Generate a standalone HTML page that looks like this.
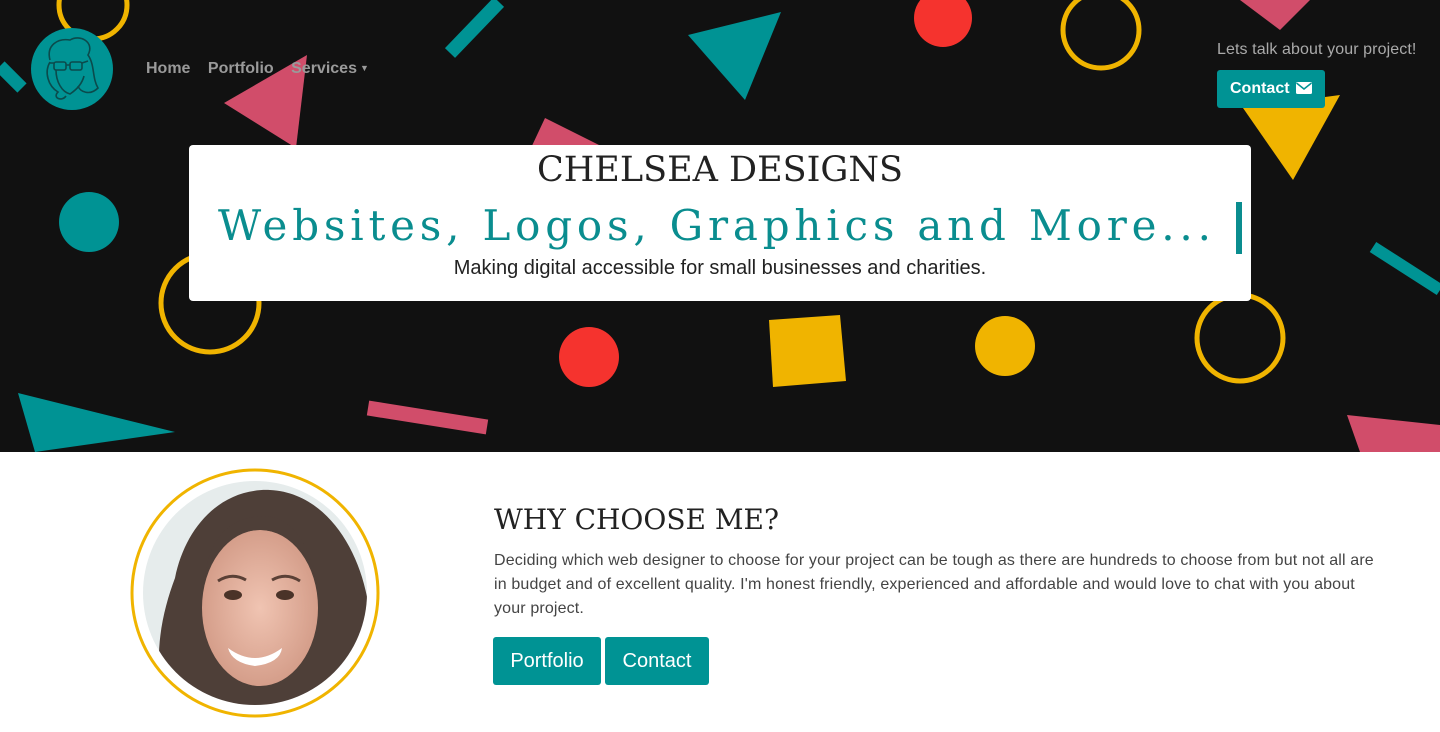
<!DOCTYPE html>
<html><head><meta charset="utf-8"><style>
*{margin:0;padding:0;box-sizing:border-box}
body{width:1440px;height:732px;overflow:hidden;background:#fff;font-family:"Liberation Sans",sans-serif;position:relative}
.hero{position:absolute;left:0;top:0;width:1440px;height:452px;background:#111;overflow:hidden}
.hero svg.bg{position:absolute;left:0;top:0}
.nav{position:absolute;top:60px;left:146px;color:#9a9a9a;font-weight:bold;font-size:16px}
.nav span{margin-right:13px}
.talk{position:absolute;left:1217px;top:41px;color:#aaa;font-size:16px;font-weight:300;letter-spacing:0.1px}
.cbtn{position:absolute;left:1217px;top:70px;width:108px;height:38px;background:#009394;border-radius:3px;color:#fff;font-weight:bold;font-size:16px;line-height:38px;padding-left:13px;white-space:nowrap}
.cbtn svg{vertical-align:-1px;margin-left:2px}
.card{position:absolute;left:189px;top:145px;width:1062px;height:156px;background:#fff;border-radius:4px;text-align:center}
.t1{position:absolute;left:0;width:100%;top:5px;font-family:"DejaVu Serif",serif;font-size:35px;color:#222;text-align:center}
.t2{position:absolute;left:29px;top:56px;font-family:"DejaVu Serif",serif;font-size:42px;color:#0a8d8f;letter-spacing:4.8px;white-space:nowrap}
.cur{position:absolute;left:1047px;top:57px;width:6px;height:52px;background:#0a8d8f}
.t3{position:absolute;left:0;width:100%;top:112px;font-size:20px;color:#222;font-weight:300}
h2{position:absolute;left:494px;top:503px;font-family:"DejaVu Serif",serif;font-weight:normal;font-size:28px;color:#222}
p{position:absolute;left:494px;top:549px;width:890px;font-size:16px;line-height:24px;color:#444;letter-spacing:0.15px}
.b{position:absolute;top:637px;height:48px;background:#009394;color:#fff;font-size:20px;line-height:48px;text-align:center;border-radius:3px}
</style></head><body>
<div class="hero">
<svg class="bg" width="1440" height="452">
<circle cx="93" cy="5" r="34" fill="none" stroke="#f0b400" stroke-width="5"/>
<line x1="0" y1="66" x2="22" y2="88" stroke="#009394" stroke-width="13"/>
<line x1="450" y1="53" x2="499" y2="2" stroke="#009394" stroke-width="14"/>
<polygon points="688,35 781,12 745,100" fill="#009394"/>
<circle cx="943" cy="18" r="29" fill="#f5332e"/>
<circle cx="1101" cy="30" r="38" fill="none" stroke="#f0b400" stroke-width="5"/>
<polygon points="1240,0 1310,0 1280,30" fill="#d14d6a"/>
<polygon points="224,103 307,55 296,148" fill="#d14d6a"/>
<polygon points="530,150 545,118 605,148" fill="#d14d6a"/>
<polygon points="1243,108 1340,95 1293,180" fill="#f0b400"/>
<circle cx="89" cy="222" r="30" fill="#009394"/>
<circle cx="210" cy="303" r="49" fill="none" stroke="#f0b400" stroke-width="5"/>
<line x1="1373" y1="247" x2="1440" y2="290" stroke="#009394" stroke-width="12"/>
<circle cx="589" cy="357" r="30" fill="#f5332e"/>
<polygon points="769,320 840,315 846,381 773,387" fill="#f0b400"/>
<circle cx="1005" cy="346" r="30" fill="#f0b400"/>
<circle cx="1240" cy="338" r="43" fill="none" stroke="#f0b400" stroke-width="5"/>
<line x1="368" y1="408" x2="487" y2="427" stroke="#d14d6a" stroke-width="15"/>
<polygon points="18,393 175,432 35,452" fill="#009394"/>
<polygon points="1347,415 1440,425 1440,452 1360,452" fill="#d14d6a"/>
<circle cx="72" cy="69" r="41" fill="#009394"/>
<g fill="none" stroke="#0b4b4c" stroke-width="1.6">
<path d="M50,60 C46,45 58,38 70,40 C80,34 95,42 88,55 C95,65 92,78 98,88 C90,96 80,92 78,86"/>
<path d="M56,70 C56,82 62,92 70,94 C76,90 82,84 84,76"/>
<path d="M50,62 C44,72 48,86 58,92 C52,98 62,102 66,96"/>
<rect x="54" y="62" width="12" height="8" rx="2"/><rect x="70" y="62" width="12" height="8" rx="2"/>
<path d="M66,65 L70,65 M50,63 L54,63 M82,63 L88,61"/>
</g>
</svg>
<div class="nav"><span>Home</span> <span>Portfolio</span> <span>Services</span><span style="font-size:9px;vertical-align:2px;margin-left:-10px">▼</span></div>
<div class="talk">Lets talk about your project!</div>
<div class="cbtn">Contact <svg width="16" height="12"><rect width="16" height="12" rx="1.5" fill="#fff"/><path d="M0.5,1 L8,7 L15.5,1" fill="none" stroke="#009394" stroke-width="1.5"/></svg></div>
<div class="card">
<div class="t1">CHELSEA DESIGNS</div>
<div class="t2">Websites, Logos, Graphics and More...</div>
<div class="cur"></div>
<div class="t3">Making digital accessible for small businesses and charities.</div>
</div>
</div>
<svg style="position:absolute;left:130px;top:468px" width="252" height="252">
<defs><radialGradient id="sk" cx="50%" cy="50%" r="55%"><stop offset="0" stop-color="#f0c4b2"/><stop offset="1" stop-color="#d29a86"/></radialGradient><clipPath id="c"><circle cx="125" cy="125" r="112"/></clipPath></defs>
<circle cx="125" cy="125" r="123" fill="#fff" stroke="#f0b400" stroke-width="3"/>
<g clip-path="url(#c)">
<rect width="252" height="252" fill="#e6ecec"/>
<path d="M40,260 C20,200 30,150 45,110 C55,60 90,20 140,22 C200,25 235,90 240,150 C245,200 235,240 230,260Z" fill="#4e3f38"/>
<ellipse cx="130" cy="140" rx="58" ry="78" fill="url(#sk)"/>
<path d="M75,110 C80,60 110,48 135,48 C165,50 180,80 185,110 C175,75 150,62 130,62 C105,62 85,80 75,110Z" fill="#4e3f38"/>
<path d="M98,180 Q125,200 152,180 Q150,195 125,198 Q102,195 98,180Z" fill="#fff"/>
<ellipse cx="103" cy="127" rx="9" ry="5" fill="#4a3328"/><ellipse cx="155" cy="127" rx="9" ry="5" fill="#4a3328"/>
<path d="M88,113 Q102,104 116,112 M142,112 Q156,104 170,113" stroke="#5a4036" stroke-width="3" fill="none"/>
</g>
</svg>
<h2>WHY CHOOSE ME?</h2>
<p>Deciding which web designer to choose for your project can be tough as there are hundreds to choose from but not all are in budget and of excellent quality. I'm honest friendly, experienced and affordable and would love to chat with you about your project.</p>
<div class="b" style="left:493px;width:108px">Portfolio</div>
<div class="b" style="left:605px;width:104px">Contact</div>
</body></html>
